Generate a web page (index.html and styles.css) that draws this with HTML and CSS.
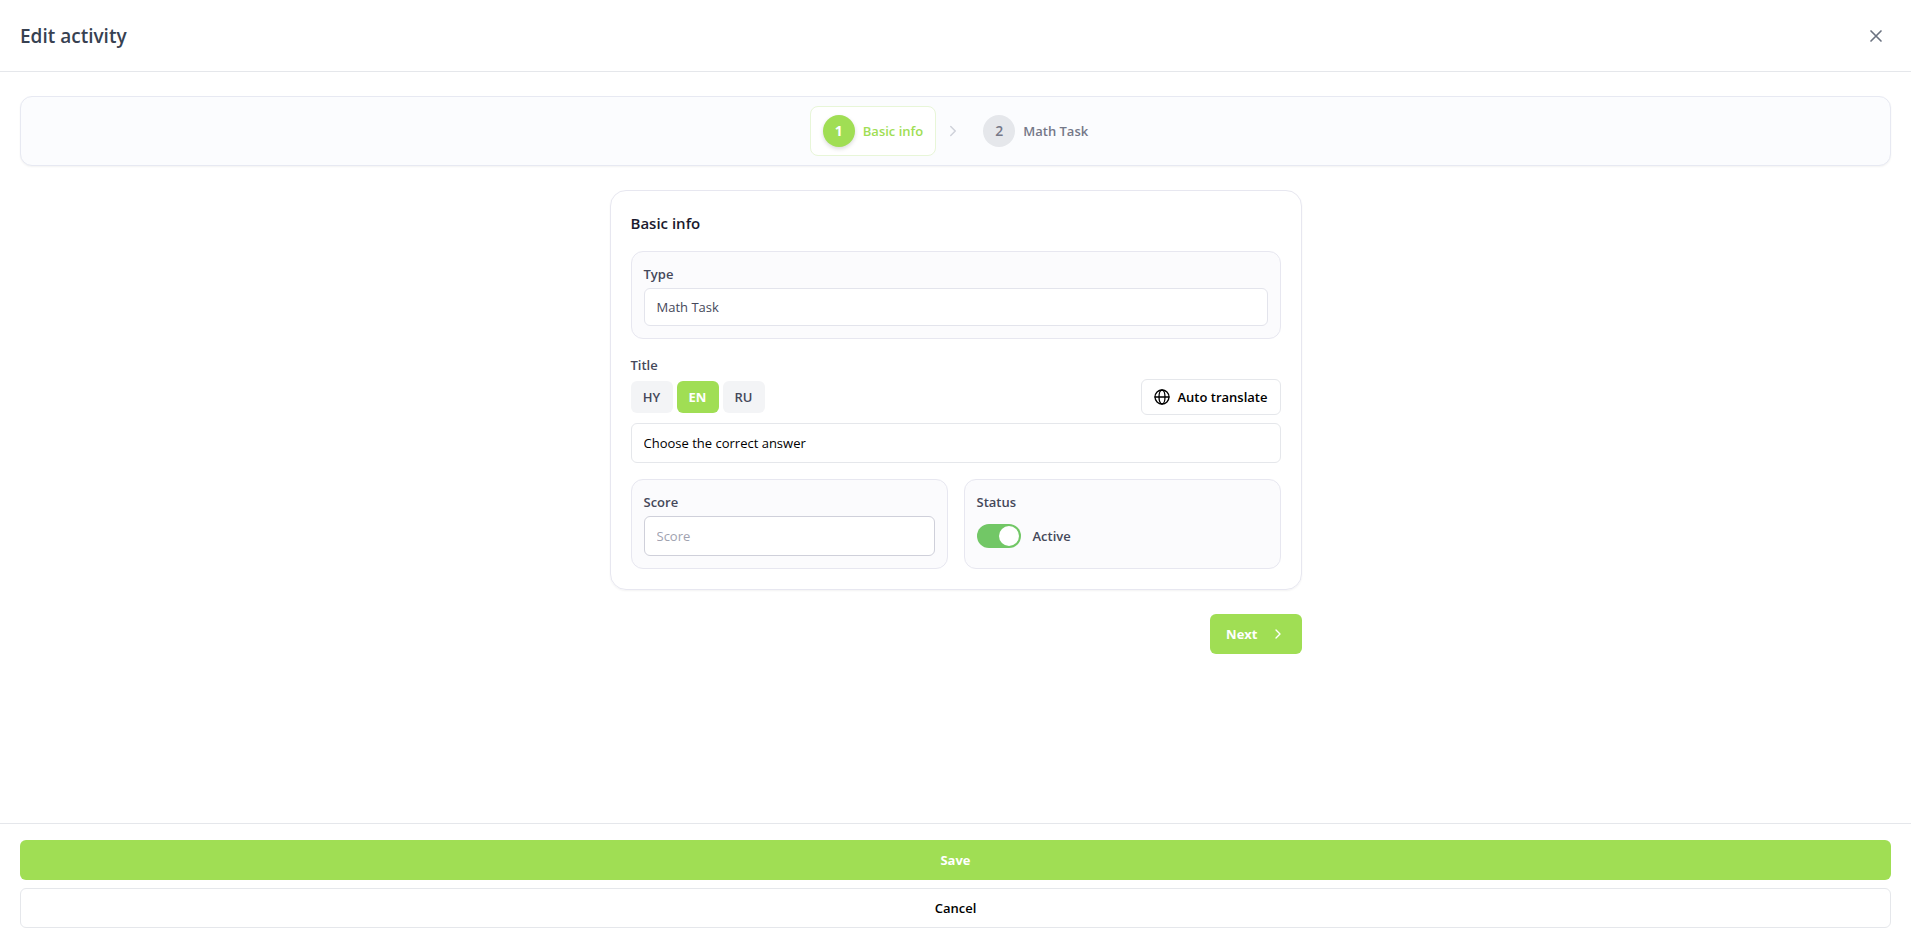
FILE: index.html
```html
<!DOCTYPE html>
<html lang="en">
  <head>
    <meta charset="UTF-8" />
    <title>Edit activity</title>
    <link rel="stylesheet" href="styles.css">
  </head>
  <body>
    <header class="header">
      <h1>Edit activity</h1>
      <button type="button" class="close-button" aria-label="Close">
        <svg width="20" height="20" viewBox="0 0 24 24"><path d="M18 6 6 18M6 6l12 12" /></svg>
      </button>
    </header>

    <main class="content">
      <!-- Steps -->
      <nav class="stepper">
        <button type="button" class="step active">
          <span class="step-number">1</span>
          <span>Basic info</span>
        </button>
        <svg class="step-arrow" width="18" height="18" viewBox="0 0 24 24"><path d="m9 6 6 6-6 6" /></svg>
        <button type="button" class="step">
          <span class="step-number">2</span>
          <span>Math Task</span>
        </button>
      </nav>

      <form class="form" id="activity-form">
        <section class="card">
          <h2>Basic info</h2>

          <div class="box">
            <label for="type">Type</label>
            <input class="input type-input" id="type" type="text" value="Math Task" readonly />
          </div>

          <div class="title-field">
            <label for="title">Title</label>
            <div class="title-bar">
              <div class="languages">
                <button type="button" class="language">HY</button>
                <button type="button" class="language active">EN</button>
                <button type="button" class="language">RU</button>
              </div>
              <button type="button" class="translate-button">
                <svg width="16" height="16" viewBox="0 0 16 16">
                  <circle cx="8" cy="8" r="7" />
                  <ellipse cx="8" cy="8" rx="3" ry="7" />
                  <path d="M1 8h14" />
                </svg>
                Auto translate
              </button>
            </div>
            <input class="input title-input" id="title" type="text" value="Choose the correct answer" />
          </div>

          <div class="columns">
            <div class="box">
              <label for="score">Score</label>
              <input class="input score-input" id="score" type="text" placeholder="Score" />
            </div>
            <div class="box">
              <div class="label">Status</div>
              <label class="switch">
                <input type="checkbox" checked />
                Active
              </label>
            </div>
          </div>
        </section>

        <button type="button" class="button primary next-button">
          Next
          <svg width="16" height="16" viewBox="0 0 24 24"><path d="m9 6 6 6-6 6" /></svg>
        </button>
      </form>
    </main>

    <footer class="footer">
      <button type="submit" form="activity-form" class="button primary">Save</button>
      <button type="button" class="button">Cancel</button>
    </footer>
  </body>
</html>
```

FILE: styles.css
```css
* {
  box-sizing: border-box;
}

body {
  margin: 0;
  min-height: 100vh;
  display: flex;
  flex-direction: column;
  background-color: #fff;
  color: #000;
  font-family: 'Segoe UI', 'Open Sans', sans-serif;
  font-size: 13px;
  line-height: 20px;
}

button,
input {
  font: inherit;
  color: inherit;
}

button {
  padding: 0;
  border: none;
  background: none;
  cursor: pointer;
}

svg {
  flex-shrink: 0;
  fill: none;
  stroke: currentColor;
  stroke-width: 2;
  stroke-linecap: round;
  stroke-linejoin: round;
}

h1,
h2 {
  margin: 0;
  font-weight: 600;
}

.header {
  height: 72px;
  padding: 0 20px;
  display: flex;
  align-items: center;
  justify-content: space-between;
  border-bottom: 1px solid #e5e7eb;
}

h1 {
  font-size: 19px;
  line-height: 28px;
  color: #374151;
}

.close-button {
  width: 30px;
  height: 30px;
  display: flex;
  align-items: center;
  justify-content: center;
  color: #6b7280;
}

.content {
  flex-grow: 1;
  padding: 24px 20px;
}

/* Steps */
.stepper {
  padding: 9px;
  display: flex;
  align-items: center;
  justify-content: center;
  gap: 8px;
  border: 1px solid #e7e9f2;
  border-radius: 12px;
  background-color: #fbfcfe;
  box-shadow: 0 1px 2px rgba(0, 0, 0, 0.05);
}

.step {
  padding: 8px 12px;
  display: flex;
  align-items: center;
  gap: 8px;
  border: 1px solid transparent;
  border-radius: 8px;
  font-weight: 600;
  color: #757888;
}

.step.active {
  border-color: #e8f6d8;
  background-color: #fff;
  color: #a0de54;
}

.step-number {
  width: 32px;
  height: 32px;
  border-radius: 50%;
  line-height: 32px;
  font-size: 14px;
  background-color: #e5e7eb;
}

.step.active .step-number {
  background-color: #a0de54;
  color: #fff;
  font-weight: 700;
  box-shadow: 0 2px 4px rgba(0, 0, 0, 0.15);
}

.step-arrow {
  color: #cfd2da;
}

/* Form */
.form {
  max-width: 692px;
  margin: 24px auto 0;
  display: flex;
  flex-direction: column;
  gap: 24px;
}

.card {
  padding: 20px;
  display: flex;
  flex-direction: column;
  gap: 16px;
  border: 1px solid #e7e7f0;
  border-radius: 16px;
  box-shadow: 0 1px 2px rgba(0, 0, 0, 0.05);
}

h2 {
  font-size: 15px;
  line-height: 24px;
  color: #1a1a2e;
}

.box {
  padding: 12px;
  border: 1px solid #e7e7f0;
  border-radius: 12px;
  background-color: #fbfbfd;
}

label,
.label {
  display: block;
  margin-bottom: 4px;
  font-weight: 600;
  color: #45485a;
}

.input {
  display: block;
  width: 100%;
  height: 40px;
  padding: 0 12px;
  border: 1px solid #e5e7eb;
  border-radius: 6px;
  background-color: #fff;
  outline: none;
}

.type-input {
  height: 38px;
  border-color: #e3e4ec;
  color: #45485a;
}

.title-input {
  margin-top: 8px;
}

.score-input {
  border-color: #cfd0da;
}

.input::placeholder {
  color: #a0a2b0;
  opacity: 1;
}

.title-bar {
  display: flex;
  align-items: center;
  justify-content: space-between;
}

.languages {
  display: flex;
  gap: 4px;
}

.language {
  min-width: 42px;
  height: 32px;
  padding: 0 12px;
  border-radius: 6px;
  background-color: #f3f4f6;
  font-weight: 600;
  color: #45485a;
}

.language.active {
  background-color: #a0de54;
  color: #fff;
  font-weight: 700;
}

.translate-button {
  height: 36px;
  padding: 0 12px;
  display: flex;
  align-items: center;
  gap: 8px;
  border: 1px solid #e5e7eb;
  border-radius: 6px;
  font-weight: 600;
}

.translate-button svg {
  stroke-width: 1.3;
}

.columns {
  display: grid;
  grid-template-columns: 1fr 1fr;
  gap: 16px;
}

.switch {
  height: 40px;
  margin: 0;
  display: flex;
  align-items: center;
  gap: 12px;
  cursor: pointer;
}

.switch input {
  appearance: none;
  width: 44px;
  height: 24px;
  margin: 0;
  padding: 2px;
  display: flex;
  border-radius: 12px;
  background-color: #d1d5db;
}

.switch input::before {
  content: '';
  width: 20px;
  height: 20px;
  border-radius: 50%;
  background-color: #fff;
}

.switch input:checked {
  justify-content: flex-end;
  background-color: #72c766;
}

.button {
  height: 40px;
  padding: 0 16px;
  border: 1px solid #e5e7eb;
  border-radius: 6px;
  font-weight: 600;
}

.primary {
  border: none;
  background-color: #a0de54;
  color: #fff;
  font-weight: 700;
}

.next-button {
  align-self: flex-end;
  display: flex;
  align-items: center;
  gap: 12px;
}

.footer {
  padding: 16px 20px 13px;
  display: flex;
  flex-direction: column;
  gap: 8px;
  border-top: 1px solid #e5e7eb;
}
```
